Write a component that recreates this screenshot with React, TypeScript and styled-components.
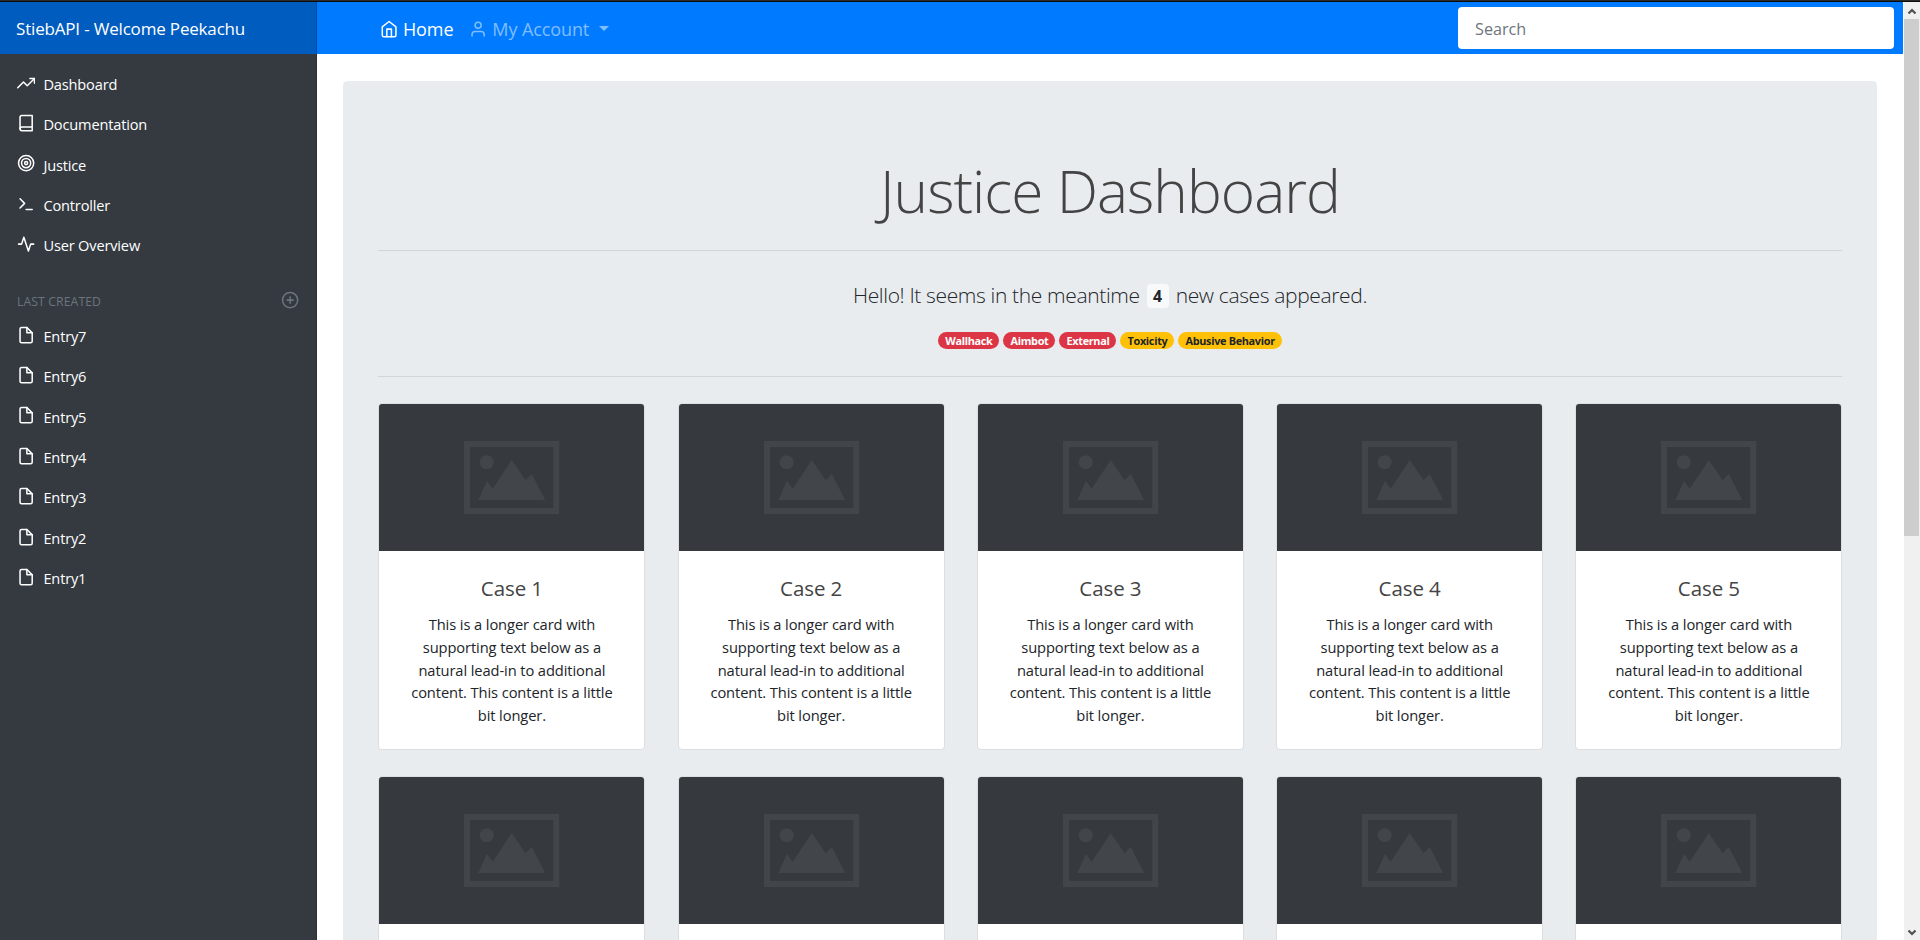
import React from "react";
import styled, { createGlobalStyle } from "styled-components";

const GlobalStyle = createGlobalStyle`
  *, *::before, *::after { box-sizing: border-box; }
  html, body { margin: 0; padding: 0; overflow: hidden; }
  body {
    background: #fff;
    color: #212529;
    font-family: "Open Sans", "Noto Sans", sans-serif;
    font-size: 14.7px;
  }
`;

const Window = styled.div`
  display: flex;
  flex-direction: column;
  height: 940px;
  overflow: hidden;
`;

const WindowEdge = styled.div`
  flex: none;
  height: 2px;
  background: #2b2b2b;
  border-bottom: 1px solid #0c0c0c;
`;

const Viewport = styled.div`
  display: flex;
  flex: 1;
  min-height: 0;
`;

const Sidebar = styled.aside`
  flex: none;
  width: 317px;
  background: #343a40;
  border-right: 1px solid #2c3136;
`;

const Brand = styled.a`
  display: flex;
  align-items: center;
  width: 317px;
  height: 52px;
  padding: 1px 0 0 16px;
  background: #005cbf;
  border-right: 1px solid #004a9c;
  color: #fff;
  font-size: 17px;
  letter-spacing: -0.18px;
`;

const NavList = styled.ul`
  margin: 0;
  padding: 9.6px 0 0;
  list-style: none;
`;

const EntryList = styled(NavList)`
  padding-top: 1.1px;
`;

const NavItem = styled.li`
  display: flex;
  align-items: center;
  gap: 8.2px;
  height: 40.4px;
  padding-left: 17px;
  color: #fff;
  font-size: 14.6px;
  letter-spacing: -0.17px;

  svg {
    margin-bottom: 2px;
  }
`;

const SidebarHeading = styled.div`
  display: flex;
  align-items: center;
  justify-content: space-between;
  height: 26px;
  margin-top: 22.9px;
  padding: 1px 16.6px 0 17px;
  color: #6c757d;
  font-size: 12.2px;
  letter-spacing: 0.12px;
  text-transform: uppercase;

  svg {
    margin-bottom: 4px;
  }
`;

const Glyph = styled.svg.attrs({ viewBox: "0 0 24 24", width: 18.24, height: 18.24 })`
  flex: none;
  fill: none;
  stroke: currentColor;
  stroke-width: 2;
  stroke-linecap: round;
  stroke-linejoin: round;
`;

const Main = styled.div`
  flex: 1;
  min-width: 0;
  display: flex;
  flex-direction: column;
  margin-right: 1px;
`;

const Navbar = styled.nav`
  flex: none;
  display: flex;
  align-items: center;
  height: 52px;
  padding: 0 9px 0 63px;
  background: #007bff;
`;

const NavLink = styled.a<{ $active?: boolean }>`
  display: flex;
  align-items: center;
  gap: 4.7px;
  height: 48px;
  margin: 0 16px 1px 0;
  color: ${(p) => (p.$active ? "#fff" : "#80bdff")};
  font-size: 18px;
  letter-spacing: -0.1px;

  svg {
    margin-top: 4px;
  }
`;

const LinkText = styled.span`
  margin-top: 3px;
`;

const Caret = styled.span`
  margin: 1px 0 0 5px;
  border: 5px solid transparent;
  border-top-color: currentColor;
  border-bottom: 0;
`;

const SearchBox = styled.input`
  width: 436px;
  height: 42px;
  margin-left: auto;
  padding: 2px 17px 0;
  border: 0;
  border-radius: 4px;
  background: #fff;
  font-family: inherit;
  font-size: 16.2px;

  &::placeholder {
    color: #6c757d;
    opacity: 1;
  }
`;

const Content = styled.main`
  flex: 1;
  min-height: 0;
  padding: 27px 26px 0;
  overflow: hidden;
`;

const Jumbotron = styled.section`
  height: 1200px;
  padding: 73px 35px 0;
  border-radius: 4.5px;
  background: #e9ecef;
  text-align: center;
`;

const Title = styled.h1`
  margin: 0 0 23px;
  color: #444;
  font-size: 58.5px;
  font-weight: 300;
  line-height: 73px;
  letter-spacing: -0.95px;
`;

const Rule = styled.hr`
  height: 1px;
  margin: 0;
  border: 0;
  background: #d2d4d7;
`;

const Lead = styled.p`
  display: flex;
  align-items: center;
  justify-content: center;
  margin: 27px 0 20px;
  height: 34px;
  font-size: 21px;
  font-weight: 300;
  letter-spacing: -0.36px;
`;

const CountBadge = styled.span`
  display: flex;
  align-items: center;
  justify-content: center;
  width: 22px;
  height: 24px;
  margin: 2px 7px 0 7px;
  border-radius: 4px;
  background: #f8f9fa;
  font-size: 15.8px;
  font-weight: 700;
  letter-spacing: 0;
`;

const Tags = styled.div`
  display: flex;
  justify-content: center;
  gap: 4px;
  margin-bottom: 27px;
`;

const Tag = styled.span<{ $tone: "danger" | "warning" }>`
  height: 17px;
  padding: 0 7px;
  border-radius: 9px;
  background: ${(p) => (p.$tone === "danger" ? "#dc3545" : "#ffc107")};
  color: ${(p) => (p.$tone === "danger" ? "#fff" : "#212529")};
  font-size: 10.9px;
  font-weight: 700;
  line-height: 18px;
  letter-spacing: -0.32px;
`;

const CaseGrid = styled.div`
  display: grid;
  grid-template-columns: repeat(5, 267px);
  justify-content: space-between;
  row-gap: 26px;
  width: 1464px;
  margin: 26px 0 0 0.4px;
`;

const Card = styled.article`
  height: 347px;
  border: 1px solid #dcdfe1;
  border-radius: 4px;
  background: #fff;
  overflow: hidden;
`;

const Thumb = styled.svg.attrs({ viewBox: "0 0 265 147" })`
  display: block;
  width: 265px;
  height: 147px;
  background: #36393e;
`;

const CardTitle = styled.h5`
  margin: 23px 0 11px;
  color: #444;
  font-size: 20.5px;
  font-weight: 400;
  line-height: 28px;
  letter-spacing: -0.1px;
`;

const CardText = styled.p`
  margin: 0 24px;
  font-size: 14.7px;
  line-height: 22.8px;
  letter-spacing: -0.1px;
`;

const Scrollbar = styled.div`
  flex: none;
  display: flex;
  flex-direction: column;
  align-items: center;
  width: 16px;
  background: #f0f0f0;
`;

const ScrollButton = styled.svg.attrs({ viewBox: "0 0 16 17", width: 16, height: 17 })`
  flex: none;
  fill: none;
  stroke: #505050;
  stroke-width: 2.2;
`;

const ScrollThumb = styled.div`
  width: 15px;
  height: 517px;
  margin: 0 1px auto 0;
  background: #cdcdcd;
`;

const sections = [
  {
    label: "Dashboard",
    icon: (
      <>
        <polyline points="23 6 13.5 15.5 8.5 10.5 1 18" />
        <polyline points="17 6 23 6 23 12" />
      </>
    ),
  },
  {
    label: "Documentation",
    icon: (
      <>
        <path d="M4 19.5A2.5 2.5 0 0 1 6.5 17H20" />
        <path d="M6.5 2H20v20H6.5A2.5 2.5 0 0 1 4 19.5v-15A2.5 2.5 0 0 1 6.5 2z" />
      </>
    ),
  },
  {
    label: "Justice",
    icon: (
      <>
        <circle cx="12" cy="12" r="10" />
        <circle cx="12" cy="12" r="6" />
        <circle cx="12" cy="12" r="2" />
      </>
    ),
  },
  {
    label: "Controller",
    icon: (
      <>
        <polyline points="4 17 10 11 4 5" />
        <line x1="12" y1="19" x2="20" y2="19" />
      </>
    ),
  },
  {
    label: "User Overview",
    icon: <polyline points="22 12 18 12 15 21 9 3 6 12 2 12" />,
  },
];

const entries = ["Entry7", "Entry6", "Entry5", "Entry4", "Entry3", "Entry2", "Entry1"];

const tags: { label: string; tone: "danger" | "warning" }[] = [
  { label: "Wallhack", tone: "danger" },
  { label: "Aimbot", tone: "danger" },
  { label: "External", tone: "danger" },
  { label: "Toxicity", tone: "warning" },
  { label: "Abusive Behavior", tone: "warning" },
];

const cases = Array.from({ length: 10 }, (_, i) => i + 1);

function CaseCard({ number }: { number: number }) {
  return (
    <Card>
      <Thumb>
        <rect x="88" y="40" width="89.3" height="67" fill="none" stroke="#424549" strokeWidth="6" />
        <circle cx="107.7" cy="58.3" r="7" fill="#424549" />
        <polygon
          points="99.3,96 108,76.7 113.7,84.7 132.7,56 146.7,76.3 152.7,69.7 166.3,96"
          fill="#424549"
        />
      </Thumb>
      <CardTitle>Case {number}</CardTitle>
      <CardText>
        This is a longer card with supporting text below as a natural lead-in to additional
        content. This content is a little bit longer.
      </CardText>
    </Card>
  );
}

export default function App() {
  return (
    <Window>
      <GlobalStyle />
      <WindowEdge />
      <Viewport>
        <Sidebar>
          <Brand>StiebAPI - Welcome Peekachu</Brand>
          <NavList>
            {sections.map((s) => (
              <NavItem key={s.label}>
                <Glyph>{s.icon}</Glyph>
                {s.label}
              </NavItem>
            ))}
          </NavList>
          <SidebarHeading>
            Last created
            <Glyph>
              <circle cx="12" cy="12" r="10" />
              <line x1="12" y1="8" x2="12" y2="16" />
              <line x1="8" y1="12" x2="16" y2="12" />
            </Glyph>
          </SidebarHeading>
          <EntryList>
            {entries.map((name) => (
              <NavItem key={name}>
                <Glyph>
                  <path d="M13 2H6a2 2 0 0 0-2 2v16a2 2 0 0 0 2 2h12a2 2 0 0 0 2-2V9z" />
                  <polyline points="13 2 13 9 20 9" />
                </Glyph>
                {name}
              </NavItem>
            ))}
          </EntryList>
        </Sidebar>

        <Main>
          <Navbar>
            <NavLink $active>
              <Glyph>
                <path d="M3 9l9-7 9 7v11a2 2 0 0 1-2 2H5a2 2 0 0 1-2-2z" />
                <polyline points="9 22 9 12 15 12 15 22" />
              </Glyph>
              <LinkText>Home</LinkText>
            </NavLink>
            <NavLink>
              <Glyph>
                <path d="M20 21v-2a4 4 0 0 0-4-4H8a4 4 0 0 0-4 4v2" />
                <circle cx="12" cy="7" r="4" />
              </Glyph>
              <LinkText>My Account</LinkText>
              <Caret />
            </NavLink>
            <SearchBox placeholder="Search" />
          </Navbar>

          <Content>
            <Jumbotron>
              <Title>Justice Dashboard</Title>
              <Rule />
              <Lead>
                <span>Hello! It seems in the meantime</span>
                <CountBadge>4</CountBadge>
                <span>new cases appeared.</span>
              </Lead>
              <Tags>
                {tags.map((t) => (
                  <Tag key={t.label} $tone={t.tone}>
                    {t.label}
                  </Tag>
                ))}
              </Tags>
              <Rule />
              <CaseGrid>
                {cases.map((n) => (
                  <CaseCard key={n} number={n} />
                ))}
              </CaseGrid>
            </Jumbotron>
          </Content>
        </Main>

        <Scrollbar>
          <ScrollButton>
            <path d="M4.5 11.5 L8 8 L11.5 11.5" />
          </ScrollButton>
          <ScrollThumb />
          <ScrollButton>
            <path d="M4.5 7.5 L8 11 L11.5 7.5" />
          </ScrollButton>
        </Scrollbar>
      </Viewport>
    </Window>
  );
}
